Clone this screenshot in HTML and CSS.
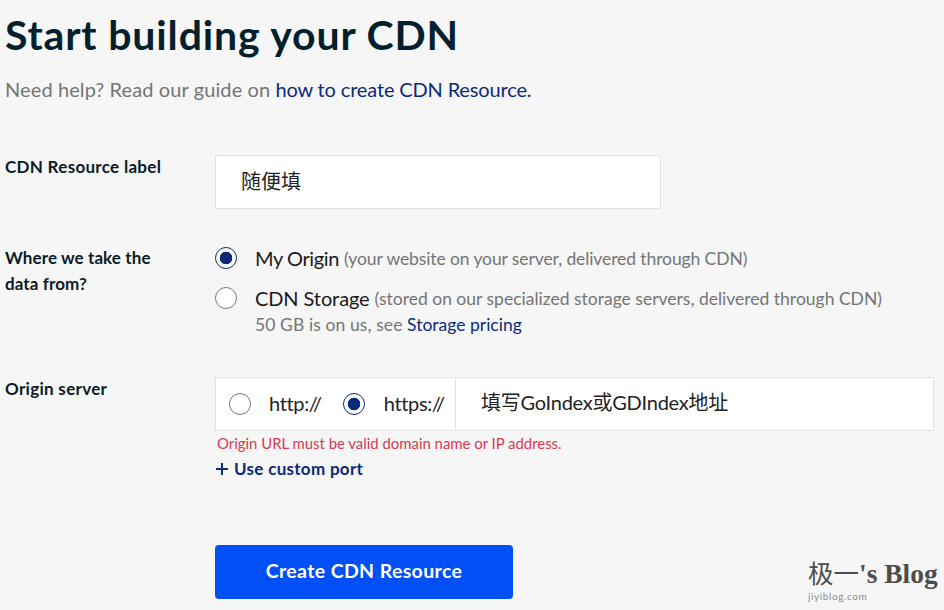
FILE: index.html
```html
<!DOCTYPE html>
<html lang="en">
<head>
    <meta charset="UTF-8">
    <title>Start building your CDN</title>
    <link rel="stylesheet" href="styles.css">
</head>
<body>
    <h1>Start building your CDN</h1>
    <p class="help">Need help? Read our guide on <a href="#">how to create CDN Resource.</a></p>

    <form>
        <div class="row row-label">
            <div class="label">CDN Resource label</div>
            <div class="field">
                <div class="text-input">随便填</div>
            </div>
        </div>

        <div class="row row-source">
            <div class="label">Where we take the data from?</div>
            <div class="field">
                <div class="option option-origin">
                    <span class="radio checked"></span>
                    <span class="option-name">My Origin</span>
                    <span class="note">(your website on your server, delivered through CDN)</span>
                </div>
                <div class="option option-storage">
                    <span class="radio"></span>
                    <span class="option-name">CDN Storage</span>
                    <span class="note">(stored on our specialized storage servers, delivered through CDN)</span>
                </div>
                <div class="note extra">50 GB is on us, see <a href="#">Storage pricing</a></div>
            </div>
        </div>

        <div class="row row-origin">
            <div class="label">Origin server</div>
            <div class="field">
                <div class="origin-input">
                    <div class="protocols">
                        <span class="radio"></span>
                        <span class="protocol">http://</span>
                        <span class="radio checked"></span>
                        <span class="protocol">https://</span>
                    </div>
                    <div class="origin-url">填写GoIndex或GDIndex地址</div>
                </div>
                <div class="error">Origin URL must be valid domain name or IP address.</div>
                <a class="custom-port" href="#">
                    <svg width="14" height="14" viewBox="0 0 14 14"><path d="M7 1v12M1 7h12" stroke="#0b2a7c" stroke-width="2" fill="none"/></svg>
                    Use custom port
                </a>
            </div>
        </div>

        <div class="row row-submit">
            <div class="label"></div>
            <div class="field">
                <button type="button">Create CDN Resource</button>
            </div>
        </div>
    </form>

    <div class="watermark">
        <div class="watermark-name"><span class="watermark-cjk">极一</span>'s Blog</div>
        <div class="watermark-url">jiyiblog.com</div>
    </div>
</body>
</html>
```

FILE: styles.css
```css
* {
    box-sizing: border-box;
}

html, body {
    height: 610px;
    overflow: hidden;
}

body {
    margin: 0;
    padding: 0 10px 0 5px;
    background: #f6f6f6;
    color: #0a1c26;
    font-family: Lato, "Noto Sans CJK SC", sans-serif;
    position: relative;
}

a {
    color: #0b2a7c;
    text-decoration: none;
}

h1 {
    margin: 0;
    padding-top: 9px;
    font-size: 41px;
    line-height: 52px;
    font-weight: 700;
    color: #04202c;
    letter-spacing: 0.85px;
}

.help {
    margin: 0;
    padding-top: 15px;
    font-size: 20px;
    line-height: 26px;
    color: #757575;
    letter-spacing: 0.1px;
}

.help a {
    letter-spacing: -0.15px;
}

.row {
    display: flex;
}

.label {
    width: 210px;
    flex-shrink: 0;
    margin-top: -1px;
    font-size: 17px;
    line-height: 26px;
    font-weight: 700;
    color: #0a1c26;
    letter-spacing: 0.3px;
}

.field {
    flex: 1;
}

.row-label {
    margin-top: 53px;
}

.text-input {
    width: 446px;
    height: 54px;
    background: #fff;
    border: 1px solid #e2e2e2;
    border-radius: 2px;
    padding-left: 25px;
    font-size: 20px;
    line-height: 50px;
    color: #222;
}

.row-source {
    margin-top: 36px;
}

.row-source .label {
    width: 180px;
    margin-top: 0;
    margin-right: 30px;
    letter-spacing: 0.1px;
}

.option {
    display: flex;
    align-items: center;
    height: 26px;
}

.option-storage {
    margin-top: 14px;
}

.option-name {
    margin-left: 18px;
    font-size: 20px;
    color: #1a1a1a;
    letter-spacing: -0.1px;
}

.option-origin .option-name {
    letter-spacing: -0.4px;
}

.note {
    margin-left: 5px;
    font-size: 17.5px;
    color: #757575;
}

.option-origin .note {
    letter-spacing: -0.1px;
}

.extra {
    margin-left: 40px;
    line-height: 28px;
    letter-spacing: 0.1px;
}

.extra a {
    letter-spacing: 0;
}

.radio {
    width: 22px;
    height: 22px;
    flex-shrink: 0;
    border: 1px solid #777;
    border-radius: 50%;
    background: #fff;
    display: inline-block;
}

.radio.checked {
    border: 1.5px solid #0b2a7c;
    background: radial-gradient(circle, #0b2a7c 0, #0b2a7c 6px, #fff 6.6px);
}

.row-origin {
    margin-top: 38px;
}

.origin-input {
    display: flex;
    width: 719px;
    height: 54px;
    background: #fff;
    border: 1px solid #e2e2e2;
    border-radius: 2px;
}

.protocols {
    display: flex;
    align-items: center;
    width: 240px;
    padding-left: 13px;
    border-right: 1px solid #e2e2e2;
}

.protocol {
    margin-left: 18px;
    margin-right: 21px;
    padding-bottom: 2px;
    font-size: 20px;
    color: #222;
    letter-spacing: -0.35px;
}

.protocol:last-child {
    margin-left: 19px;
    margin-right: 0;
}

.origin-url {
    padding-left: 25px;
    font-size: 20px;
    line-height: 48px;
    color: #222;
    letter-spacing: -0.25px;
}

.error {
    margin-top: 2px;
    margin-left: 2px;
    font-size: 14.9px;
    line-height: 20px;
    color: #d9394e;
}

.custom-port {
    display: flex;
    align-items: center;
    gap: 5px;
    margin-top: 4px;
    font-size: 17px;
    line-height: 24px;
    font-weight: 700;
    letter-spacing: 0.3px;
}

.row-submit {
    margin-top: 64px;
}

button {
    display: block;
    width: 298px;
    height: 54px;
    padding: 0 0 4px;
    background: #0050f5;
    color: #fff;
    border: none;
    border-radius: 4px;
    font-family: inherit;
    font-size: 19.5px;
    font-weight: 700;
    letter-spacing: 0.37px;
    cursor: pointer;
}

.watermark {
    position: absolute;
    left: 808px;
    top: 559px;
    color: #4d4d4d;
}

.watermark-name {
    font-family: "Liberation Serif", "Noto Sans CJK SC", serif;
    font-size: 27.5px;
    line-height: 30px;
    font-weight: 700;
    white-space: nowrap;
}

.watermark-cjk {
    font-size: 25.5px;
    font-weight: 400;
}

.watermark-url {
    font-size: 10px;
    line-height: 12px;
    color: #8a8a8a;
    letter-spacing: 0.6px;
}
```
